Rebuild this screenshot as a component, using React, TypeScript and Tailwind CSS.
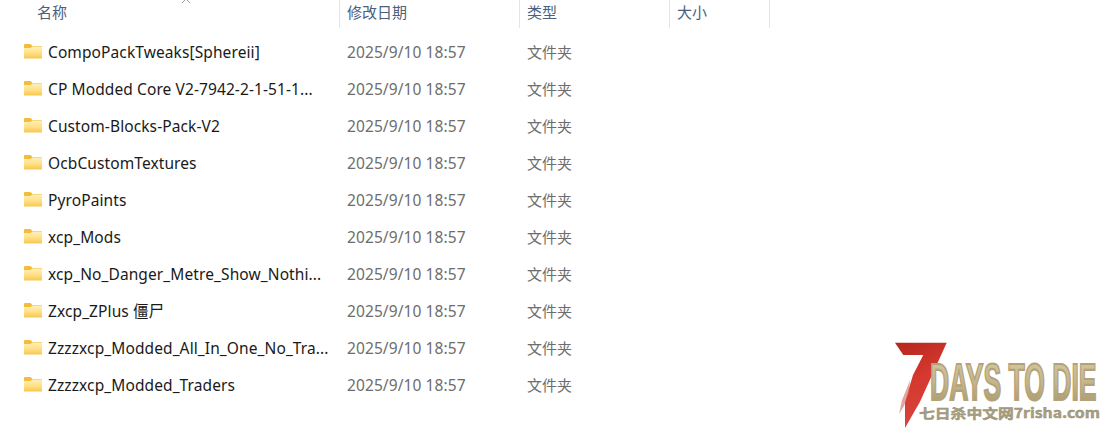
const FONT = "font-['Noto_Sans','Noto_Sans_CJK_SC',sans-serif]";

const folders = [
  'CompoPackTweaks[Sphereii]',
  'CP Modded Core V2-7942-2-1-51-1...',
  'Custom-Blocks-Pack-V2',
  'OcbCustomTextures',
  'PyroPaints',
  'xcp_Mods',
  'xcp_No_Danger_Metre_Show_Nothi...',
  'Zxcp_ZPlus 僵尸',
  'Zzzzxcp_Modded_All_In_One_No_Tra...',
  'Zzzzxcp_Modded_Traders',
];

function FolderIcon() {
  return (
    <svg width="18" height="15" viewBox="0 0 18 15" className="shrink-0">
      <defs>
        <linearGradient id="folderBody" x1="0" y1="0" x2="0" y2="1">
          <stop offset="0" stopColor="#fff0b8" />
          <stop offset="0.55" stopColor="#ffdf84" />
          <stop offset="1" stopColor="#f7c64e" />
        </linearGradient>
      </defs>
      <path d="M0 1 Q0 0 1 0 H6.5 L8.5 2 H18 V6 H0 Z" fill="#f2bd3d" />
      <path d="M0 4 H6.5 L8.5 2.6 H18 V14.5 H0 Z" fill="url(#folderBody)" />
    </svg>
  );
}

function Logo() {
  return (
    <div className="absolute left-[890px] top-[338px] w-[216px] h-[96px]">
      <svg width="216" height="96" viewBox="0 0 216 96" className="absolute left-0 top-0">
        <defs>
          <linearGradient id="dirt" x1="0" y1="0" x2="0" y2="1">
            <stop offset="0" stopColor="#d6cba8" />
            <stop offset="0.5" stopColor="#c6b68c" />
            <stop offset="1" stopColor="#a39268" />
          </linearGradient>
          <linearGradient id="blood" x1="0" y1="0" x2="0.3" y2="1">
            <stop offset="0" stopColor="#b5261c" />
            <stop offset="0.5" stopColor="#d5382e" />
            <stop offset="1" stopColor="#d8453c" />
          </linearGradient>
        </defs>
        <path
          d="M5 4.7 H56.7 L43 35 L30 63.7 L15 90 L15 63.7 L23 37 L33.3 17 H13.3 Z"
          fill="url(#blood)"
        />
        <path d="M9 76 L12 62 L17 50 L20 42 L19 54 L14 68 Z" fill="#dc7d76" opacity="0.7" />
        <text
          transform="translate(40 62) scale(0.51 1)"
          fontFamily="'Liberation Sans', sans-serif"
          fontWeight="700"
          fontSize="52"
          fill="url(#dirt)"
          stroke="#b3a278"
          strokeWidth="2.2"
        >
          DAYS TO DIE
        </text>
        <text
          x="29"
          y="80"
          fontFamily="'Noto Sans CJK SC', sans-serif"
          fontWeight="700"
          fontSize="13"
          fill="#a89f84"
          stroke="#968a6c"
          strokeWidth="0.4"
          textLength="181"
          lengthAdjust="spacingAndGlyphs"
        >
          七日杀中文网7risha.com
        </text>
      </svg>
    </div>
  );
}

export default function App() {
  return (
    <div className={`relative w-[1112px] h-[440px] overflow-hidden bg-white ${FONT}`}>
      <svg width="12" height="4" viewBox="0 0 12 4" className="absolute left-[181px] top-0">
        <path d="M1 3 L4 0 M9 3 L6 0" stroke="#9aa0a6" fill="none" strokeWidth="1" />
      </svg>

      {/* Column headers */}
      <div className="flex h-[28px] text-[15px] text-[#4c607a] leading-[24px]">
        <div className="w-[340px] pl-[37px] border-r border-[#e5e5e5]">名称</div>
        <div className="w-[180px] pl-[7px] border-r border-[#e5e5e5]">修改日期</div>
        <div className="w-[150px] pl-[7px] border-r border-[#e5e5e5]">类型</div>
        <div className="w-[100px] pl-[7px] border-r border-[#e5e5e5]">大小</div>
      </div>

      {/* Rows */}
      <div className="flex flex-col pt-[6px]">
        {folders.map((name) => (
          <div key={name} className="flex items-center h-[37px] pb-[2px] text-[15.5px] leading-[22px]">
            <div className="w-[340px] pl-[24px] flex items-center gap-[6px] text-[#1a1a1a] whitespace-nowrap tracking-[0.1px]">
              <FolderIcon />
              <span>{name}</span>
            </div>
            <div className="w-[180px] pl-[7px] text-[#6d6d6d] tracking-[0.1px]">2025/9/10 18:57</div>
            <div className="pl-[7px] text-[15px] text-[#6d6d6d]">文件夹</div>
          </div>
        ))}
      </div>

      <Logo />
    </div>
  );
}
